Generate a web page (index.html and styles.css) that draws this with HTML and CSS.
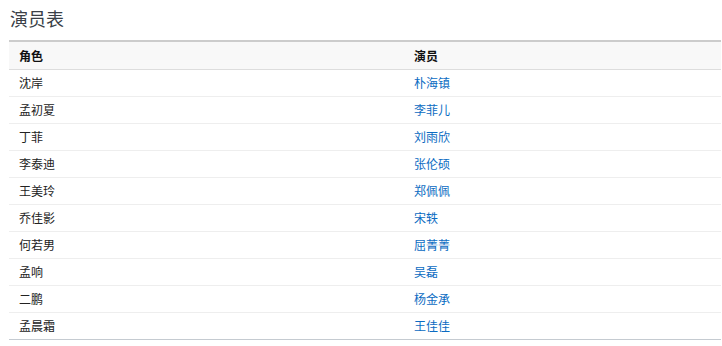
FILE: index.html
```html
<!DOCTYPE html>
<html lang="zh-CN">
<head>
<meta charset="utf-8">
<title>演员表</title>
<link rel="stylesheet" href="styles.css">
</head>
<body>
<div class="page">
  <h2 class="title">演员表</h2>
  <table class="cast">
    <thead>
      <tr><th class="col-role">角色</th><th>演员</th></tr>
    </thead>
    <tbody>
      <tr><td>沈岸</td><td><a href="#">朴海镇</a></td></tr>
      <tr><td>孟初夏</td><td><a href="#">李菲儿</a></td></tr>
      <tr><td>丁菲</td><td><a href="#">刘雨欣</a></td></tr>
      <tr><td>李泰迪</td><td><a href="#">张伦硕</a></td></tr>
      <tr><td>王美玲</td><td><a href="#">郑佩佩</a></td></tr>
      <tr><td>乔佳影</td><td><a href="#">宋轶</a></td></tr>
      <tr><td>何若男</td><td><a href="#">屈菁菁</a></td></tr>
      <tr><td>孟响</td><td><a href="#">吴磊</a></td></tr>
      <tr><td>二鹏</td><td><a href="#">杨金承</a></td></tr>
      <tr class="last"><td>孟晨霜</td><td><a href="#">王佳佳</a></td></tr>
    </tbody>
  </table>
</div>
</body>
</html>
```
FILE: styles.css
```css
html, body {
  margin: 0;
  padding: 0;
  background: #fff;
}
.page {
  padding: 5px 1px 0 9px;
  font-family: "Noto Sans CJK SC", "Noto Sans", sans-serif;
  color: #222;
}
.title {
  margin: 0 0 0 1px;
  font-size: 18px;
  font-weight: normal;
  line-height: 26px;
  height: 35px;
  color: #3a3f47;
}
.cast {
  width: 100%;
  border-collapse: collapse;
  border-top: 2px solid #cccccc;
  font-size: 12px;
}
.cast th, .cast td {
  text-align: left;
  padding: 0 10px;
  height: 26px;
  line-height: 16px;
  vertical-align: middle;
}
.cast th {
  height: 27px;
  background: #f8f8f8;
  border-bottom: 1px solid #dddddd;
  font-weight: bold;
  color: #111;
}
.col-role {
  width: 375px;
}
.cast td {
  border-bottom: 1px solid #eeeeee;
  color: #222;
}
.cast tr.last td {
  border-bottom: 1px solid #c5cbd1;
}
.cast a {
  color: #0b6bc2;
  text-decoration: none;
}
```
